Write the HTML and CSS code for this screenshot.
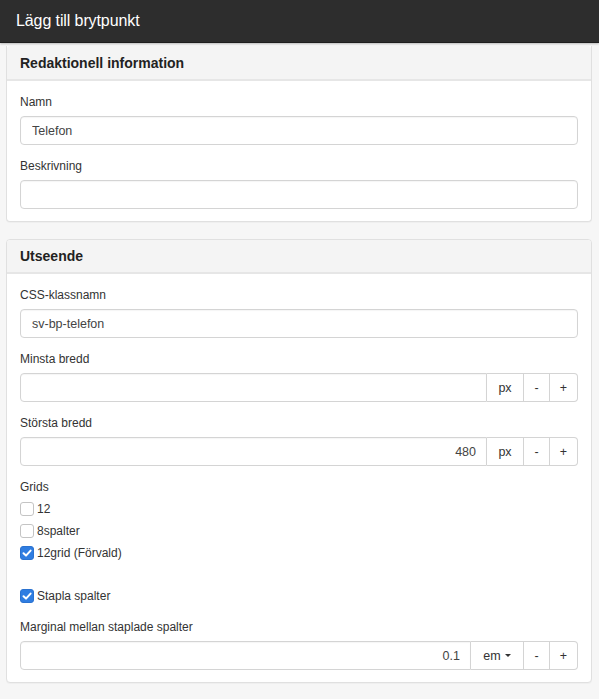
FILE: index.html
```html
<!DOCTYPE html>
<html lang="sv">
<head>
<meta charset="utf-8">
<title>Lägg till brytpunkt</title>
<link rel="stylesheet" href="styles.css">
</head>
<body>
<header class="topbar"><h1 class="title">Lägg till brytpunkt</h1></header>
<main class="content">
  <section class="panel panel-first">
    <div class="panel-heading">Redaktionell information</div>
    <div class="panel-body">
      <div class="form-group">
        <label class="label">Namn</label>
        <input class="input" type="text" value="Telefon">
      </div>
      <div class="form-group">
        <label class="label">Beskrivning</label>
        <input class="input" type="text" value="">
      </div>
    </div>
  </section>

  <section class="panel">
    <div class="panel-heading">Utseende</div>
    <div class="panel-body">
      <div class="form-group">
        <label class="label">CSS-klassnamn</label>
        <input class="input" type="text" value="sv-bp-telefon">
      </div>
      <div class="form-group">
        <label class="label">Minsta bredd</label>
        <div class="input-group">
          <input class="input input-num" type="text" value="">
          <span class="addon addon-unit">px</span>
          <span class="addon addon-btn">-</span>
          <span class="addon addon-btn addon-last">+</span>
        </div>
      </div>
      <div class="form-group">
        <label class="label">Största bredd</label>
        <div class="input-group">
          <input class="input input-num" type="text" value="480">
          <span class="addon addon-unit">px</span>
          <span class="addon addon-btn">-</span>
          <span class="addon addon-btn addon-last">+</span>
        </div>
      </div>
      <div class="form-group">
        <label class="label">Grids</label>
        <div class="checks">
          <label class="check"><span class="box"></span>12</label>
          <label class="check"><span class="box"></span>8spalter</label>
          <label class="check"><span class="box box-on"><svg viewBox="0 0 14 14" width="14" height="14"><path d="M3.5 7.3 L6 9.6 L10.6 4.6" fill="none" stroke="#fff" stroke-width="2" stroke-linecap="round" stroke-linejoin="round"/></svg></span>12grid (Förvald)</label>
        </div>
      </div>
      <div class="form-group form-group-stack">
        <label class="check"><span class="box box-on"><svg viewBox="0 0 14 14" width="14" height="14"><path d="M3.5 7.3 L6 9.6 L10.6 4.6" fill="none" stroke="#fff" stroke-width="2" stroke-linecap="round" stroke-linejoin="round"/></svg></span>Stapla spalter</label>
      </div>
      <div class="form-group form-group-last">
        <label class="label">Marginal mellan staplade spalter</label>
        <div class="input-group">
          <input class="input input-num" type="text" value="0.1">
          <span class="addon addon-drop">em<span class="caret"></span></span>
          <span class="addon addon-btn">-</span>
          <span class="addon addon-btn addon-last">+</span>
        </div>
      </div>
    </div>
  </section>
</main>
</body>
</html>
```

FILE: styles.css
```css
* { box-sizing: border-box; }
html, body {
  margin: 0;
  padding: 0;
  background: #f6f6f6;
  font-family: "Liberation Sans", Arial, Helvetica, sans-serif;
  color: #333;
  font-size: 12px;
}
.topbar {
  height: 43px;
  background: #2d2d2d;
  border-bottom: 1px solid #1e1e1e;
  box-shadow: 0 1px 2px rgba(0,0,0,0.25);
  display: flex;
  align-items: center;
  padding: 0 16px;
  position: relative;
  z-index: 2;
}
.title {
  margin: 0;
  color: #fff;
  font-size: 16px;
  font-weight: normal;
  letter-spacing: -0.1px;
}
.content {
  padding: 0 7px 20px 6px;
}
.panel {
  background: #fff;
  border: 1px solid #e0e0e0;
  border-radius: 4px;
  margin-top: 17px;
  box-shadow: 0 1px 1px rgba(0,0,0,0.03);
}
.panel-first {
  margin-top: 3px;
  border-top-left-radius: 0;
  border-top-right-radius: 0;
  border-top: none;
}
.panel-heading {
  background: #f4f4f4;
  border-bottom: 2px solid #e6e6e6;
  height: 34px;
  padding: 0 13px;
  display: flex;
  align-items: center;
  font-size: 14px;
  font-weight: bold;
  color: #222;
  border-radius: 3px 3px 0 0;
}
.panel-first .panel-heading {
  height: 35px;
  padding-top: 1px;
}
.panel-body {
  padding: 12px 13px 12px 13px;
}
.form-group {
  display: flex;
  flex-direction: column;
  margin-bottom: 12px;
}
.form-group:last-child { margin-bottom: 0; }
.label {
  display: block;
  line-height: 18px;
  height: 18px;
  margin-bottom: 5px;
  font-size: 12px;
  color: #333;
}
.input {
  height: 29px;
  width: 100%;
  border: 1px solid #d4d4d4;
  border-radius: 4px;
  padding: 0 11px;
  font-family: inherit;
  font-size: 12.5px;
  color: #444;
  background: #fff;
  box-shadow: inset 0 1px 1px rgba(0,0,0,0.04);
  outline: none;
}
.input-group {
  display: flex;
  height: 29px;
}
.input-group .input {
  flex: 1;
  min-width: 0;
  border-radius: 4px 0 0 4px;
  text-align: right;
  padding-right: 10px;
}
.addon {
  display: flex;
  align-items: center;
  justify-content: center;
  border: 1px solid #d4d4d4;
  border-left: none;
  background: #fff;
  color: #333;
  font-size: 12.5px;
  height: 29px;
}
.addon-unit { width: 37px; }
.addon-drop { width: 53px; }
.addon-btn { width: 26px; }
.addon-last { width: 28px; border-radius: 0 4px 4px 0; }
.caret {
  display: inline-block;
  width: 0;
  height: 0;
  margin-left: 4px;
  border-left: 3px solid transparent;
  border-right: 3px solid transparent;
  border-top: 3px solid #333;
}
.checks {
  display: flex;
  flex-direction: column;
  gap: 4px;
  margin-top: -1px;
}
.check {
  display: flex;
  align-items: center;
  height: 18px;
  font-size: 12px;
  color: #333;
}
.box {
  width: 14px;
  height: 14px;
  border: 1px solid #c4c4c4;
  border-radius: 3px;
  background: #fff;
  margin-right: 3px;
  display: inline-flex;
  flex: none;
}
.box-on {
  background: #2f7de1;
  border-color: #2a72d0;
}
.box-on svg { display: block; margin: -1px; }
.form-group-stack {
  margin-top: 25px;
  margin-bottom: 13px;
}
```
